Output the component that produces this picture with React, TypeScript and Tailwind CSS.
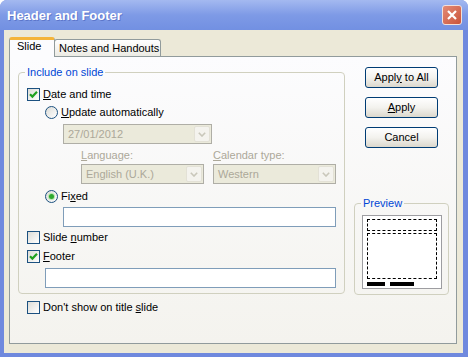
import type { ReactNode } from 'react'

function Check({ checked }: { checked?: boolean }) {
  return (
    <span className="flex h-[13px] w-[13px] shrink-0 items-center justify-center border border-[#1C5180] bg-linear-to-br from-[#DCDCD7] to-white">
      {checked && (
        <svg width="11" height="11" viewBox="0 0 11 11">
          <path d="M2 5.2 L4.4 7.6 L9 2.8" stroke="#21A121" strokeWidth="2.2" fill="none" />
        </svg>
      )}
    </span>
  )
}

function Radio({ selected }: { selected?: boolean }) {
  return (
    <span className="flex h-[13px] w-[13px] shrink-0 items-center justify-center rounded-full border border-[#1C5180] bg-linear-to-br from-[#DCDCD7] to-white">
      {selected && (
        <span className="h-[5px] w-[5px] rounded-full bg-[#2FA82F] shadow-[0_0_0_1px_#B8E6B0]" />
      )}
    </span>
  )
}

function Row({ children, className }: { children: ReactNode; className?: string }) {
  return <div className={`flex h-[13px] items-center gap-[3px] ${className ?? ''}`}>{children}</div>
}

function Combo({ value, className }: { value: string; className?: string }) {
  return (
    <div className={`flex h-[20px] items-center border border-[#AFAEA6] bg-[#EBEADB] p-px ${className ?? ''}`}>
      <span className="flex-1 pl-[3px] text-[#ACA899]">{value}</span>
      <span className="flex h-full w-[16px] items-center justify-center rounded-[2px] border border-[#E3E1D6] bg-[#F4F3EE]">
        <svg width="8" height="5" viewBox="0 0 8 5">
          <path d="M0.8 0.8 L4 4 L7.2 0.8" stroke="#C9C7BA" strokeWidth="1.6" fill="none" />
        </svg>
      </span>
    </div>
  )
}

function Button({ children }: { children: ReactNode }) {
  return (
    <button className="flex h-[21px] w-[73px] items-center justify-center rounded-[3px] border border-[#003C74] bg-linear-to-b from-white via-[#F3F2EE] to-[#DCD8CD] text-black">
      <span>{children}</span>
    </button>
  )
}

export default function App() {
  return (
    <div className="flex h-[357px] w-[468px] flex-col overflow-hidden rounded-t-[7px] bg-[#6F89DE] font-['Liberation_Sans',Arial,sans-serif] text-[11px] leading-[13px] text-black">
      <div className="flex h-[30px] shrink-0 items-center justify-between bg-linear-to-b from-[#A4B9F0] via-[#7E9AE6] to-[#7290E2] pl-[7px] pr-[6px]">
        <span className="text-[13px] font-bold text-white [text-shadow:1px_1px_#3F56B080]">Header and Footer</span>
        <span className="flex h-[20px] w-[20px] items-center justify-center rounded-[3px] border border-[#F2E0DA] bg-linear-to-br from-[#E48A74] to-[#C9533B]">
          <svg width="10" height="10" viewBox="0 0 10 10">
            <path d="M1 1 L9 9 M9 1 L1 9" stroke="white" strokeWidth="2.2" />
          </svg>
        </span>
      </div>

      <div className="mb-[4px] ml-[4px] mr-[5px] flex flex-1 flex-col bg-[#ECE9D8] pb-[9px] pl-[5px] pr-[6px] pt-[7px]">
        <div className="flex h-[19px] shrink-0 items-end">
          <div className="relative z-10 -mb-px h-[20px] w-[46px] rounded-t-[3px] border-x border-t-[3px] border-x-[#919B9C] border-t-[#F4B43A] bg-[#FCFCFE] pl-[7px]">
            Slide
          </div>
          <div className="-ml-px flex h-[17px] w-[107px] items-center rounded-t-[3px] border-x border-t border-[#919B9C] bg-linear-to-b from-white to-[#ECEBE4] pl-[4px]">
            Notes and Handouts
          </div>
        </div>

        <div className="flex flex-1 border border-[#919B9C] bg-linear-to-b from-[#FCFCFE] to-[#F4F3EE] pl-[8px]">
          <div className="mt-[9px] w-[327px]">
            <fieldset className="rounded-[4px] border border-[#D0D0BF] pb-[5px] pl-[8px]">
              <legend className="-ml-[2px] px-[2px] text-[#0046D5]">Include on slide</legend>
              <Row className="mt-[9px]">
                <Check checked />
                <span><u>D</u>ate and time</span>
              </Row>
              <Row className="ml-[18px] mt-[5px]">
                <Radio />
                <span><u>U</u>pdate automatically</span>
              </Row>
              <Combo value="27/01/2012" className="ml-[36px] mt-[5px] w-[149px]" />
              <div className="ml-[54px] mt-[5px] flex text-[#ACA899]">
                <span className="w-[132px]"><u>L</u>anguage:</span>
                <span><u>C</u>alendar type:</span>
              </div>
              <div className="ml-[54px] mt-[2px] flex gap-[9px]">
                <Combo value="English (U.K.)" className="w-[123px]" />
                <Combo value="Western" className="w-[123px]" />
              </div>
              <Row className="ml-[18px] mt-[6px]">
                <Radio selected />
                <span>Fi<u>x</u>ed</span>
              </Row>
              <div className="ml-[36px] mt-[4px] h-[20px] w-[273px] border border-[#7F9DB9] bg-white" />
              <Row className="mt-[4px]">
                <Check />
                <span>Slide <u>n</u>umber</span>
              </Row>
              <Row className="mt-[6px]">
                <Check checked />
                <span><u>F</u>ooter</span>
              </Row>
              <div className="ml-[18px] mt-[5px] h-[20px] w-[291px] border border-[#7F9DB9] bg-white" />
            </fieldset>
            <Row className="ml-[9px] mt-[7px]">
              <Check />
              <span>Don't show on title <u>s</u>lide</span>
            </Row>
          </div>

          <div className="ml-[9px] flex w-[95px] flex-col items-center pt-[10px]">
            <div className="flex flex-col gap-[9px]">
              <Button>Appl<u>y</u> to All</Button>
              <Button><u>A</u>pply</Button>
              <Button>Cancel</Button>
            </div>
            <fieldset className="mt-[49px] w-[95px] rounded-[4px] border border-[#D0D0BF] pb-[5px] pl-[8px]">
              <legend className="-ml-[2px] px-[2px] text-[#0046D5]">Preview</legend>
              <div className="-ml-px mt-[5px] h-[74px] w-[80px] border border-[#9D9DA1] bg-white pl-[4px] pt-[3px]">
                <div className="h-[12px] w-[70px] border border-dashed border-black" />
                <div className="mt-[2px] h-[46px] w-[70px] border border-dashed border-black" />
                <div className="mt-[3px] flex gap-[5px]">
                  <div className="h-[4px] w-[18px] bg-black" />
                  <div className="h-[4px] w-[24px] bg-black" />
                </div>
              </div>
            </fieldset>
          </div>
        </div>
      </div>
    </div>
  )
}
